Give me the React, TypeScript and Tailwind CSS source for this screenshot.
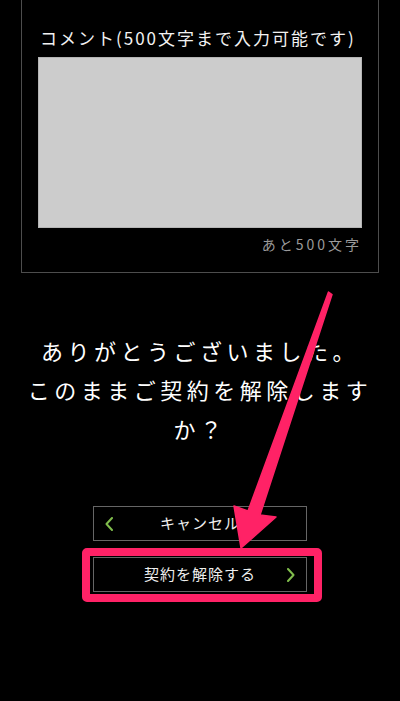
const font = { fontFamily: '"Noto Sans CJK JP", "Noto Sans", sans-serif' };

function Chevron({ dir }: { dir: 'left' | 'right' }) {
    return (
        <svg width="8" height="14" viewBox="0 0 8 14" className="text-[#80bd4c]">
            <polyline
                points={dir === 'left' ? '7,1 1.5,7 7,13' : '1,1 6.5,7 1,13'}
                fill="none"
                stroke="currentColor"
                strokeWidth="2"
                strokeLinecap="round"
                strokeLinejoin="round"
            />
        </svg>
    );
}

export default function App() {
    return (
        <div className="relative h-[701px] w-[400px] overflow-hidden bg-black" style={font}>
            {/* Comment box (top edge scrolled off) */}
            <div className="mx-[21px] border-x border-b border-[#4d4d4d] px-4 pb-[18px] pt-[26px]">
                <p className="pl-[2px] text-[17px] leading-6 tracking-[2px] text-[#f2f2f2]">
                    コメント(500文字まで入力可能です)
                </p>
                <textarea
                    className="mt-[7px] block h-[171px] w-full resize-none border border-[#b5b5b5] bg-[#cccccc]"
                    readOnly
                />
                <p className="mt-[6px] text-right text-[14px] leading-5 tracking-[3px] text-[#9a9a9a]">
                    あと500文字
                </p>
            </div>

            {/* Confirmation */}
            <p className="mx-auto mt-[58px] w-[370px] text-center text-[22px] leading-[39px] tracking-[4.5px] text-white">
                ありがとうございました。
                <br />
                このままご契約を解除しますか？
            </p>

            {/* Buttons */}
            <div className="mt-[58px] flex flex-col items-center gap-4">
                <button className="grid h-[35px] w-[214px] grid-cols-[8px_1fr_8px] items-center border border-[#666] px-[11px] text-[15px] tracking-[1px] text-[#eeeeee]">
                    <Chevron dir="left" />
                    <span>キャンセル</span>
                    <span />
                </button>
                <button className="grid h-[35px] w-[214px] grid-cols-[8px_1fr_8px] items-center border border-[#666] px-[11px] text-[15px] tracking-[1px] text-[#eeeeee]">
                    <span />
                    <span>契約を解除する</span>
                    <Chevron dir="right" />
                </button>
            </div>

            {/* Annotation: highlight frame */}
            <div className="pointer-events-none absolute left-[82px] top-[548px] h-[54px] w-[240px] rounded-[5px] border-[8px] border-[#ff2266]" />

            {/* Annotation: arrow */}
            <svg className="pointer-events-none absolute left-0 top-0" width="400" height="701" viewBox="0 0 400 701">
                <polygon
                    points="328.5,292 332,294.5 260,515 276,517 241,548 234,506 248,511"
                    fill="#ff2266"
                    stroke="#ff2266"
                    strokeWidth="1.5"
                    strokeLinejoin="round"
                />
            </svg>
        </div>
    );
}
